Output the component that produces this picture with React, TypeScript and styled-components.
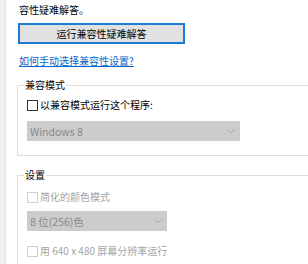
import React from "react";
import styled, { createGlobalStyle } from "styled-components";

const Global = createGlobalStyle`
  html, body { margin: 0; padding: 0; background: #ffffff; }
  body {
    font-family: "Noto Sans CJK SC", "Noto Sans", sans-serif;
    font-size: 10px;
    color: #000;
    overflow: hidden;
  }
`;

const Page = styled.div`
  display: flex;
  width: 308px;
  height: 264px;
  overflow: hidden;
`;

const SideStrip = styled.div`
  width: 5px;
  flex: none;
  background: #f0f0f0;
  border-right: 1px solid #e4e4e4;
`;

const Content = styled.div`
  flex: 1;
  display: flex;
  flex-direction: column;
  align-items: flex-start;
  padding: 3px 0 0 12px;
  min-width: 0;
`;

const Intro = styled.div`
  line-height: 14px;
  padding-left: 1px;
`;

const Button = styled.button`
  margin-top: 6px;
  width: 167px;
  height: 21px;
  box-sizing: border-box;
  border: 2px solid #1e7bd4;
  background: #e1e1e1;
  font-family: inherit;
  font-size: 10px;
  color: #000;
  padding: 0;
  line-height: 17px;
`;

const Link = styled.a`
  margin-top: 10px;
  padding-left: 1px;
  line-height: 14px;
  color: #0066cc;
  text-decoration: underline;
  cursor: pointer;
`;

const Group = styled.fieldset<{ $top: number; $pt: number; $pb: number }>`
  margin: ${(p) => p.$top}px 0 0 -1px;
  width: 320px;
  box-sizing: border-box;
  border: 1px solid #dcdcdc;
  padding: ${(p) => p.$pt}px 0 ${(p) => p.$pb}px 9px;
  display: flex;
  flex-direction: column;
  align-items: flex-start;
`;

const Legend = styled.legend`
  padding: 0 1px;
  margin-left: -3px;
  line-height: 14px;
  color: #000;
`;

const CheckRow = styled.label<{ $disabled?: boolean; $mt?: number }>`
  display: flex;
  align-items: center;
  gap: 2px;
  margin-top: ${(p) => p.$mt ?? 0}px;
  line-height: 14px;
  color: ${(p) => (p.$disabled ? "#a3a3a3" : "#000")};
`;

const Box = styled.span<{ $disabled?: boolean }>`
  width: 11px;
  height: 11px;
  box-sizing: border-box;
  border: 1px solid ${(p) => (p.$disabled ? "#cfcfcf" : "#333333")};
  background: #fff;
  flex: none;
`;

const Select = styled.div<{ $w: number; $mt: number }>`
  margin-top: ${(p) => p.$mt}px;
  width: ${(p) => p.$w}px;
  height: 20px;
  box-sizing: border-box;
  background: #cccccc;
  display: flex;
  align-items: center;
  justify-content: space-between;
  padding: 0 5px 0 3px;
  color: #8a8a8a;
  font-size: 10.5px;
`;

const Chevron = () => (
  <svg width="8" height="5" viewBox="0 0 8 5">
    <path d="M0.5 0.5 L4 4 L7.5 0.5" fill="none" stroke="#a9a9a9" strokeWidth="1" />
  </svg>
);

export default function App() {
  return (
    <>
      <Global />
      <Page>
        <SideStrip />
        <Content>
          <Intro>容性疑难解答。</Intro>
          <Button>运行兼容性疑难解答</Button>
          <Link>如何手动选择兼容性设置?</Link>
          <Group $top={10} $pt={6} $pb={14}>
            <Legend>兼容模式</Legend>
            <CheckRow>
              <Box />
              以兼容模式运行这个程序:
            </CheckRow>
            <Select $w={213} $mt={9}>
              <span>Windows 8</span>
              <Chevron />
            </Select>
          </Group>
          <Group $top={12} $pt={8} $pb={14}>
            <Legend>设置</Legend>
            <CheckRow $disabled>
              <Box $disabled />
              简化的颜色模式
            </CheckRow>
            <Select $w={140} $mt={7}>
              <span>8 位(256)色</span>
              <Chevron />
            </Select>
            <CheckRow $disabled $mt={13}>
              <Box $disabled />
              用 640 x 480 屏幕分辨率运行
            </CheckRow>
          </Group>
        </Content>
      </Page>
    </>
  );
}
